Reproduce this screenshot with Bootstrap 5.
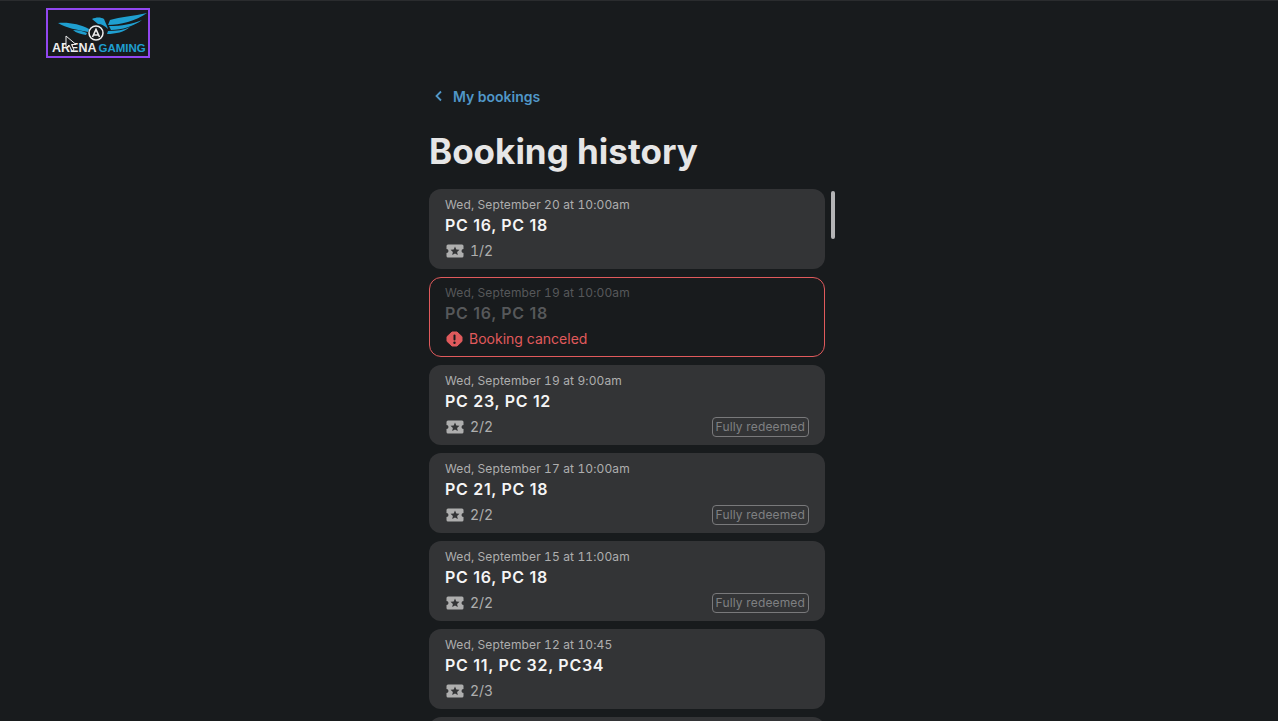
<!DOCTYPE html>
<html lang="en">
<head>
  <meta charset="UTF-8">
  <meta name="viewport" content="width=device-width, initial-scale=1.0">
  <title>Booking history</title>
  <link href="https://cdn.jsdelivr.net/npm/bootstrap@5.3.0/dist/css/bootstrap.min.css" rel="stylesheet">
  <style>
    html, body {
      height: 721px;
      overflow: hidden;
    }
    body {
      background-color: #181b1d;
      border-top: 1px solid #2a2c2e;
      font-family: 'Inter', sans-serif;
    }
    .logo-wrap {
      padding: 7px 0 0 46px;
    }
    .logo-box {
      position: relative;
      width: 104px;
      height: 50px;
      border: 2px solid #9147f0;
    }
    .logo-mark {
      position: absolute;
      left: 0;
      top: 0;
    }
    .logo-text {
      position: absolute;
      left: 4px;
      bottom: 1px;
      font-family: 'Liberation Sans', sans-serif;
      font-size: 12.5px;
      line-height: 14px;
      font-weight: 700;
      color: #eeeeee;
      white-space: nowrap;
    }
    .logo-text span {
      color: #1f9fd0;
      font-size: 11.5px;
      margin-left: 2px;
    }
    .logo-cursor {
      position: absolute;
      left: 17px;
      top: 25px;
    }
    .content-col {
      position: relative;
      width: 396px;
      margin-left: 429px;
      padding-top: 28px;
    }
    .back-link {
      gap: 9px;
      height: 20px;
      color: #5097c8;
      font-size: 14px;
      font-weight: 600;
      text-decoration: none;
      padding-left: 5px;
    }
    .page-title {
      margin: 24px 0 17px;
      color: #e6e6e6;
      font-size: 35px;
      line-height: 42px;
      font-weight: 700;
    }
    .history-list {
      gap: 8px;
    }
    .booking-item {
      height: 80px;
      padding: 8px 16px 0;
      background-color: #333436;
      border-radius: 12px;
    }
    .booking-item.is-canceled {
      background-color: transparent;
      border: 1px solid #e05a5c;
      padding: 7px 15px 0;
    }
    .booking-date {
      color: #aeaeae;
      font-size: 12px;
      line-height: 16px;
      letter-spacing: .11px;
      font-variant-numeric: tabular-nums;
    }
    .booking-pcs {
      color: #f5f5f5;
      font-size: 16px;
      line-height: 24px;
      font-weight: 600;
      letter-spacing: .7px;
    }
    .is-canceled .booking-date,
    .is-canceled .booking-pcs {
      color: #56585a;
    }
    .booking-foot {
      margin-top: 3px;
      height: 22px;
    }
    .ticket-count {
      gap: 5px;
      color: #aeaeae;
      font-size: 14px;
      font-variant-numeric: tabular-nums;
    }
    .cancel-note {
      gap: 5px;
      color: #e05a5c;
      font-size: 14px;
    }
    .ticket-count span,
    .cancel-note span {
      margin-bottom: 2px;
    }
    .redeemed-tag {
      padding: 0 3px;
      height: 20px;
      line-height: 17px;
      border: 1px solid #79797b;
      border-radius: 4px;
      color: #7f8082;
      font-size: 12px;
      letter-spacing: .15px;
    }
    .scroll-thumb {
      position: absolute;
      left: 402px;
      top: 133px;
      width: 4px;
      height: 48px;
      background-color: #b4b4b6;
      border-radius: 2px;
    }
  </style>
</head>
<body>
  <svg class="d-none">
    <symbol id="ticketIcon" viewBox="0 0 20 14">
      <path fill="#aeaeae" fill-rule="evenodd" d="M3 .5 H17 a1.500 1.500 0 0 1 1.500 1.500 V5 a2 2 0 0 0 0 4 V12 a1.500 1.500 0 0 1 -1.500 1.500 H3 a1.500 1.500 0 0 1 -1.500 -1.500 V9 a2 2 0 0 0 0 -4 V2 a1.500 1.500 0 0 1 1.500 -1.500 Z M10 2.500 L11.300 5.500 L14.500 5.800 L12.100 7.900 L12.800 11 L10 9.400 L7.200 11 L7.900 7.900 L5.500 5.800 L8.700 5.500 Z"/>
    </symbol>
  </svg>

  <div class="logo-wrap">
    <div class="logo-box">
      <svg class="logo-mark" width="100" height="46" viewBox="0 0 100 46">
        <!-- right wing -->
        <path d="M99 3 C86 6 72 7 62 10 L60 15 C72 15 88 11 99 3 Z" fill="#1f9fd0"/>
        <path d="M94 10 C84 14 74 16 61 16 L63 20 C74 20 86 16 94 10 Z" fill="#1f9fd0"/>
        <path d="M82 17 C76 20 68 21 60 21 L59 24 C68 24 76 22 82 17 Z" fill="#1f9fd0"/>
        <!-- left wing -->
        <path d="M10 13 C20 12 32 14 41 19 L40 22 C30 20 18 18 10 13 Z" fill="#1f9fd0"/>
        <path d="M25 20 C30 20 35 21 39 23 L38 25 C33 24 28 23 25 20 Z" fill="#1f9fd0"/>
        <!-- bird head -->
        <path d="M44 9 C48 7 53 7 56 9 C57 12 59 15 60 19 C57 16 54 14 50 14 C48 12 46 11 44 9 Z" fill="#1f9fd0"/>
        <!-- badge -->
        <circle cx="48" cy="23" r="7" fill="#181b1d" stroke="#eeeeee" stroke-width="1.5"/>
        <path d="M44.500 27 L48 19.500 L51.500 27 M46 25 H50" fill="none" stroke="#eeeeee" stroke-width="1.6"/>
      </svg>
      <div class="logo-text">ARENA<span>GAMING</span></div>
      <svg class="logo-cursor" width="14" height="18" viewBox="0 0 14 18">
        <path d="M1 1 L1 13 L4 10 L7 16 L9 15 L6.500 9.500 L11 9.500 Z" fill="#181b1d" stroke="#eeeeee" stroke-width="1"/>
      </svg>
    </div>
  </div>

  <main class="content-col">
    <a href="#" class="back-link d-flex align-items-center">
      <svg width="10" height="12" viewBox="0 0 10 12"><path d="M7 1.500 L2.500 6 L7 10.500" fill="none" stroke="#5097c8" stroke-width="1.800"/></svg>
      <span>My bookings</span>
    </a>
    <h1 class="page-title">Booking history</h1>

    <div class="history-list d-flex flex-column" id="historyList">
      <div class="booking-item">
        <div class="booking-date">Wed, September 20 at 10:00am</div>
        <div class="booking-pcs">PC 16, PC 18</div>
        <div class="booking-foot d-flex align-items-center justify-content-between">
          <div class="ticket-count d-flex align-items-center">
            <svg width="20" height="14"><use href="#ticketIcon"/></svg>
            <span>1/2</span>
          </div>
        </div>
      </div>

      <div class="booking-item is-canceled">
        <div class="booking-date">Wed, September 19 at 10:00am</div>
        <div class="booking-pcs">PC 16, PC 18</div>
        <div class="booking-foot d-flex align-items-center">
          <div class="cancel-note d-flex align-items-center">
            <svg width="19" height="16" viewBox="0 0 19 16"><polygon points="7,1 12,1 17,5.700 17,10.300 12,15 7,15 2,10.300 2,5.700" fill="#e05a5c" stroke="#e05a5c" stroke-width="1" stroke-linejoin="round"/><rect x="8.500" y="3.500" width="2" height="6" rx="1" fill="#181b1d"/><circle cx="9.500" cy="11.700" r="1.200" fill="#181b1d"/></svg>
            <span>Booking canceled</span>
          </div>
        </div>
      </div>

      <div class="booking-item">
        <div class="booking-date">Wed, September 19 at 9:00am</div>
        <div class="booking-pcs">PC 23, PC 12</div>
        <div class="booking-foot d-flex align-items-center justify-content-between">
          <div class="ticket-count d-flex align-items-center">
            <svg width="20" height="14"><use href="#ticketIcon"/></svg>
            <span>2/2</span>
          </div>
          <span class="redeemed-tag">Fully redeemed</span>
        </div>
      </div>

      <div class="booking-item">
        <div class="booking-date">Wed, September 17 at 10:00am</div>
        <div class="booking-pcs">PC 21, PC 18</div>
        <div class="booking-foot d-flex align-items-center justify-content-between">
          <div class="ticket-count d-flex align-items-center">
            <svg width="20" height="14"><use href="#ticketIcon"/></svg>
            <span>2/2</span>
          </div>
          <span class="redeemed-tag">Fully redeemed</span>
        </div>
      </div>

      <div class="booking-item">
        <div class="booking-date">Wed, September 15 at 11:00am</div>
        <div class="booking-pcs">PC 16, PC 18</div>
        <div class="booking-foot d-flex align-items-center justify-content-between">
          <div class="ticket-count d-flex align-items-center">
            <svg width="20" height="14"><use href="#ticketIcon"/></svg>
            <span>2/2</span>
          </div>
          <span class="redeemed-tag">Fully redeemed</span>
        </div>
      </div>

      <div class="booking-item">
        <div class="booking-date">Wed, September 12 at 10:45</div>
        <div class="booking-pcs">PC 11, PC 32, PC34</div>
        <div class="booking-foot d-flex align-items-center justify-content-between">
          <div class="ticket-count d-flex align-items-center">
            <svg width="20" height="14"><use href="#ticketIcon"/></svg>
            <span>2/3</span>
          </div>
        </div>
      </div>

      <div class="booking-item"></div>
    </div>

    <div class="scroll-thumb"></div>
  </main>

  <script src="https://cdn.jsdelivr.net/npm/bootstrap@5.3.0/dist/js/bootstrap.bundle.min.js"></script>
</body>
</html>
